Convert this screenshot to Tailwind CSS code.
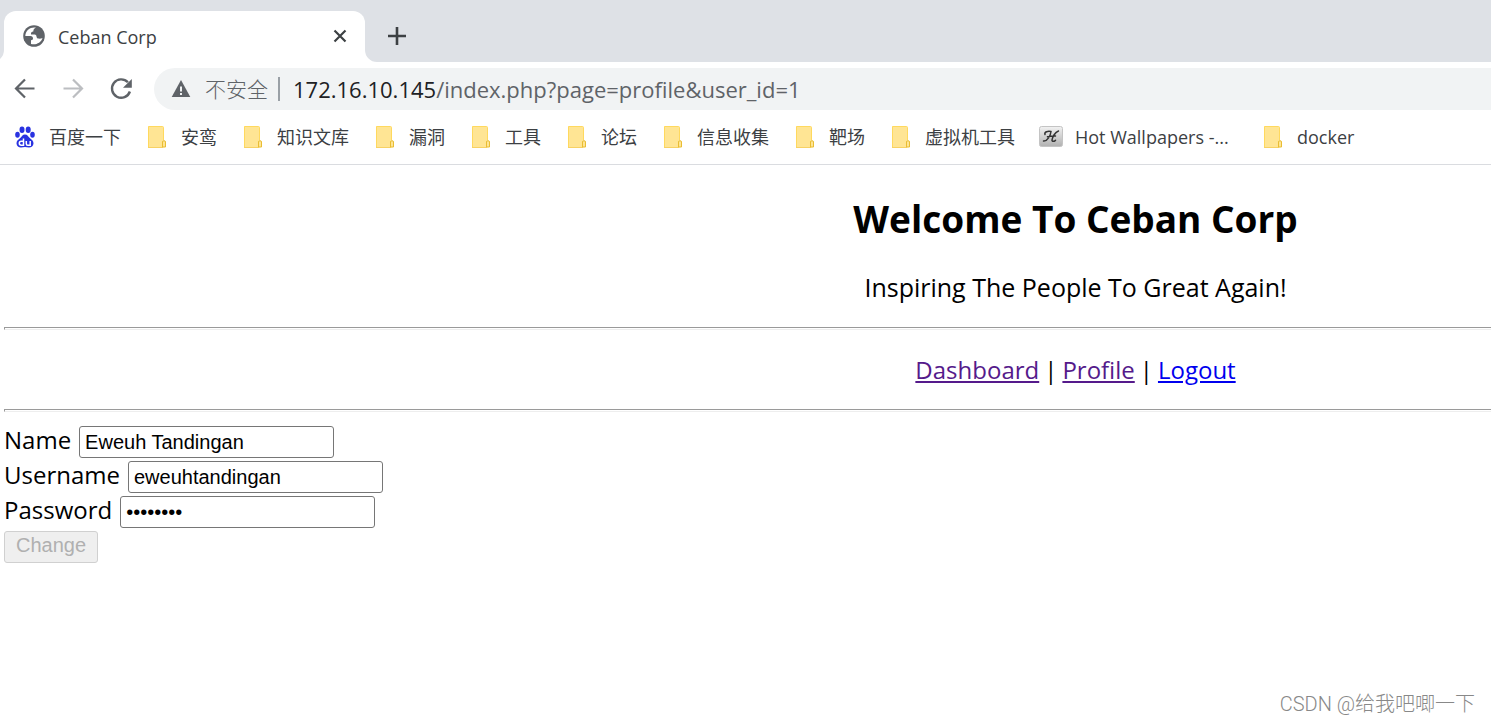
<!DOCTYPE html>
<html lang="zh-CN">
<head>
<meta charset="UTF-8" />
<meta name="viewport" content="width=device-width, initial-scale=1" />
<title>Ceban Corp</title>
<script src="https://cdn.jsdelivr.net/npm/@tailwindcss/browser@4"></script>
</head>
<body class="relative min-h-screen overflow-x-hidden bg-white font-['Open_Sans','Noto_Sans_CJK_SC',sans-serif] text-black">

<!-- Shared icons -->
<svg class="hidden">
  <symbol id="folder" viewBox="0 0 24 24">
    <path d="M3 1.500h14.500q1 0 1 1V22.500H3z" fill="#ffe594"/>
    <path d="M3.500 22.500V1.500h14q1 0 1 1V15" fill="none" stroke="#ffd95e" stroke-width="1"/>
    <path d="M3 22.500h15" stroke="#f7d164" stroke-width="1"/>
    <path d="M17.500 22v-5q0-1.300 1.500-1.300t1.500 1.300v5z" fill="#ffe594" stroke="#e9bd33" stroke-width="1"/>
  </symbol>
</svg>

<header>
  <!-- Tab strip -->
  <div class="flex h-[62px] items-end bg-[#dee1e6]">
    <svg class="h-3 w-1" viewBox="8 0 4 12"><path d="M12 0a12 12 0 0 1-12 12h12z" fill="#fff"/></svg>
    <div class="relative flex h-[51px] w-[361px] items-center rounded-t-xl bg-white pr-[17px] pl-[18px]">
      <svg class="size-6" viewBox="0 0 24 24">
        <circle cx="12" cy="11" r="10.800" fill="#5f6368"/>
        <path d="M14 2.600C9 1.500 3.500 5 3.300 11c2 0 3.700.1 5.200.1 1.700.1 2.500 1 2.500 2.400 0 1.200-.7 1.600-2 1.700v3.700c4.500 1.500 10-1 11.500-5.900-1 .5-2.500.7-3.800.6-1.500-.1-2.100-1-2.200-2.200-.1-1.300-1-1.900-2.500-1.900H9c-.3-1.800.7-2.900 2.300-3 .1-2.100.9-3.100 2.700-3.900z" fill="#fff"/>
      </svg>
      <span class="ml-3 flex-1 text-lg text-[#3c4043]">Ceban Corp</span>
      <button type="button" aria-label="关闭标签页">
        <svg class="size-4" viewBox="0 0 16 16" fill="none" stroke="#3c4043" stroke-width="2.200"><path d="M2.500 1.500l11 11M13.500 1.500l-11 11"/></svg>
      </button>
      <svg class="absolute -right-3 bottom-0 size-3" viewBox="0 0 12 12"><path d="M0 0a12 12 0 0 0 12 12H0z" fill="#fff"/></svg>
    </div>
    <button type="button" class="mb-4 ml-[22px]" aria-label="打开新的标签页">
      <svg class="size-5" viewBox="0 0 20 20" fill="none" stroke="#3c4043" stroke-width="2.600"><path d="M10 1v18M1 10h18"/></svg>
    </button>
  </div>

  <!-- Toolbar -->
  <div class="flex h-12 items-center pt-[6px] pl-[13px]">
    <button type="button" aria-label="后退">
      <svg class="size-6" viewBox="0 0 24 24" fill="none" stroke="#5f6368" stroke-width="2.200"><path d="M21.500 11.500H3.500M12 2.500l-9 9 9 9"/></svg>
    </button>
    <button type="button" class="ml-6" aria-label="前进">
      <svg class="size-6" viewBox="0 0 24 24" fill="none" stroke="#bcbec1" stroke-width="2.200"><path d="M2.500 11.500h18M12 2.500l9 9-9 9"/></svg>
    </button>
    <button type="button" class="ml-6" aria-label="重新加载">
      <svg class="size-6" viewBox="0 0 24 24"><path d="M18.900 5.300A9.200 9.200 0 1 0 20.900 14.500" fill="none" stroke="#5f6368" stroke-width="2.400"/><path d="M22.800 2v8.800H14z" fill="#5f6368"/></svg>
    </button>
    <div class="ml-[21px] flex h-[42px] flex-1 items-center rounded-l-full bg-[#f1f3f4] pl-[17px]">
      <svg class="size-5" viewBox="0 0 20 20"><path d="M10 1l9.300 17H.7z" fill="#5f6368"/><path d="M9 7.500h2v5H9zM9 14h2v2H9z" fill="#f1f3f4"/></svg>
      <span class="ml-[14px] text-[21px] leading-8 font-light text-[#5f6368]">不安全</span>
      <span class="ml-[10px] h-6 w-[2px] bg-[#9aa0a6]"></span>
      <span class="ml-[13px] text-[22px] leading-8 text-[#5f6368]"><span class="text-[#202124]">172.16.10.145</span>/index.php?page=profile&amp;user_id=1</span>
    </div>
  </div>

  <!-- Bookmarks -->
  <nav class="flex h-[55px] items-center gap-6 border-b border-[#dadce0] pl-[13px] text-lg whitespace-nowrap text-[#3c4043]">
    <a href="#" class="flex items-center gap-3">
      <svg class="size-6" viewBox="0 0 24 24" fill="#2932e1">
        <ellipse cx="9" cy="4.800" rx="2.500" ry="3.300"/><ellipse cx="15.200" cy="4.800" rx="2.500" ry="3.300"/>
        <ellipse cx="4.500" cy="9.800" rx="2.300" ry="3"/><ellipse cx="19.500" cy="9.800" rx="2.300" ry="3"/>
        <path d="M12 9.500c2.500 0 3.300 2.200 4.800 3.600 1.700 1.500 3.900 3 3.700 5.400-.2 2.800-2.200 3.900-4.500 3.900-1.500 0-2.600-.4-4-.4s-2.500.4-4 .4c-2.300 0-4.300-1.100-4.500-3.900-.2-2.400 2-3.900 3.700-5.400C8.700 11.700 9.500 9.500 12 9.500z"/>
        <path d="M10.500 13.500v6.700H8.200c-1.400 0-1.900-.8-1.900-1.900s.6-2 2-2h2M13.300 16v2.700c0 1 .5 1.500 1.400 1.500h2.500V16" fill="none" stroke="#fff" stroke-width="1.500"/>
      </svg>百度一下</a>
    <a href="#" class="flex items-center gap-3"><svg class="size-6"><use href="#folder"/></svg>安鸾</a>
    <a href="#" class="flex items-center gap-3"><svg class="size-6"><use href="#folder"/></svg>知识文库</a>
    <a href="#" class="flex items-center gap-3"><svg class="size-6"><use href="#folder"/></svg>漏洞</a>
    <a href="#" class="flex items-center gap-3"><svg class="size-6"><use href="#folder"/></svg>工具</a>
    <a href="#" class="flex items-center gap-3"><svg class="size-6"><use href="#folder"/></svg>论坛</a>
    <a href="#" class="flex items-center gap-3"><svg class="size-6"><use href="#folder"/></svg>信息收集</a>
    <a href="#" class="flex items-center gap-3"><svg class="size-6"><use href="#folder"/></svg>靶场</a>
    <a href="#" class="flex items-center gap-3"><svg class="size-6"><use href="#folder"/></svg>虚拟机工具</a>
    <a href="#" class="flex w-[198px] items-center gap-3">
      <svg class="size-6" viewBox="0 0 24 24">
        <defs><linearGradient id="tile" x2="0" y2="1"><stop stop-color="#f2f2f2"/><stop offset="1" stop-color="#b0b0b0"/></linearGradient></defs>
        <rect x="0.500" y="1.500" width="23" height="20" rx="2" fill="url(#tile)" stroke="#c4c4c4"/>
        <path d="M6 9.500C5 6.500 9 6 12 6.500 11.500 10.500 8.500 16.500 4.500 16M19.500 6C16 7 13.500 12 13 15c0 2 2 1.500 3.500.3M8.500 11.800c3-1 5-1 8-.8" fill="none" stroke="#333" stroke-width="1.500" stroke-linecap="round"/>
      </svg>Hot Wallpapers -...</a>
    <a href="#" class="flex items-center gap-3"><svg class="size-6"><use href="#folder"/></svg>docker</a>
  </nav>
</header>

<!-- The page is wider than the window and runs off its right edge -->
<main class="w-[144%] pt-7 pl-1 text-2xl leading-8">
  <div class="text-center">
    <h2 class="text-[37px] leading-[52px] font-bold">Welcome To Ceban Corp</h2>
    <p class="mt-[26px] text-[25px] leading-8">Inspiring The People To Great Again!</p>
  </div>
  <hr class="mt-6 h-[3px] border border-[#eee] border-t-[#9a9a9a] border-l-[#9a9a9a]" />
  <nav class="mt-6 flex justify-center gap-[5px]">
    <a href="#" class="text-[#551a8b] underline">Dashboard</a>
    <span>|</span>
    <a href="#" class="text-[#551a8b] underline">Profile</a>
    <span>|</span>
    <a href="#" class="text-[#0000ee] underline">Logout</a>
  </nav>
  <hr class="mt-[23px] h-[3px] border border-[#eee] border-t-[#9a9a9a] border-l-[#9a9a9a]" />

  <form class="mt-[14px] flex flex-col items-start gap-[3px]">
    <div class="flex items-start gap-2">
      <label for="name" class="leading-7">Name</label>
      <input type="text" id="name" value="Eweuh Tandingan" class="h-8 w-[255px] rounded-[3px] border border-[#767676] px-[5px] font-['Liberation_Sans',sans-serif] text-xl" />
    </div>
    <div class="flex items-start gap-2">
      <label for="username" class="leading-7">Username</label>
      <input type="text" id="username" value="eweuhtandingan" class="h-8 w-[255px] rounded-[3px] border border-[#767676] px-[5px] font-['Liberation_Sans',sans-serif] text-xl" />
    </div>
    <div class="flex items-start gap-2">
      <label for="password" class="leading-7">Password</label>
      <input type="password" id="password" value="password" class="h-8 w-[255px] rounded-[3px] border border-[#767676] px-[5px] font-['Liberation_Sans',sans-serif] text-xl" />
    </div>
    <button type="submit" disabled class="flex h-8 items-center rounded-[3px] border border-[#d0d0d0] bg-[#efefef] px-[11px] pb-1 font-['Liberation_Sans',sans-serif] text-xl text-[#b0b0b0]">Change</button>
  </form>
</main>

<div class="absolute right-4 bottom-[3px] font-['Roboto','Noto_Sans_CJK_SC',sans-serif] text-xl leading-8 font-light text-[#888]">CSDN @给我吧唧一下</div>

</body>
</html>
